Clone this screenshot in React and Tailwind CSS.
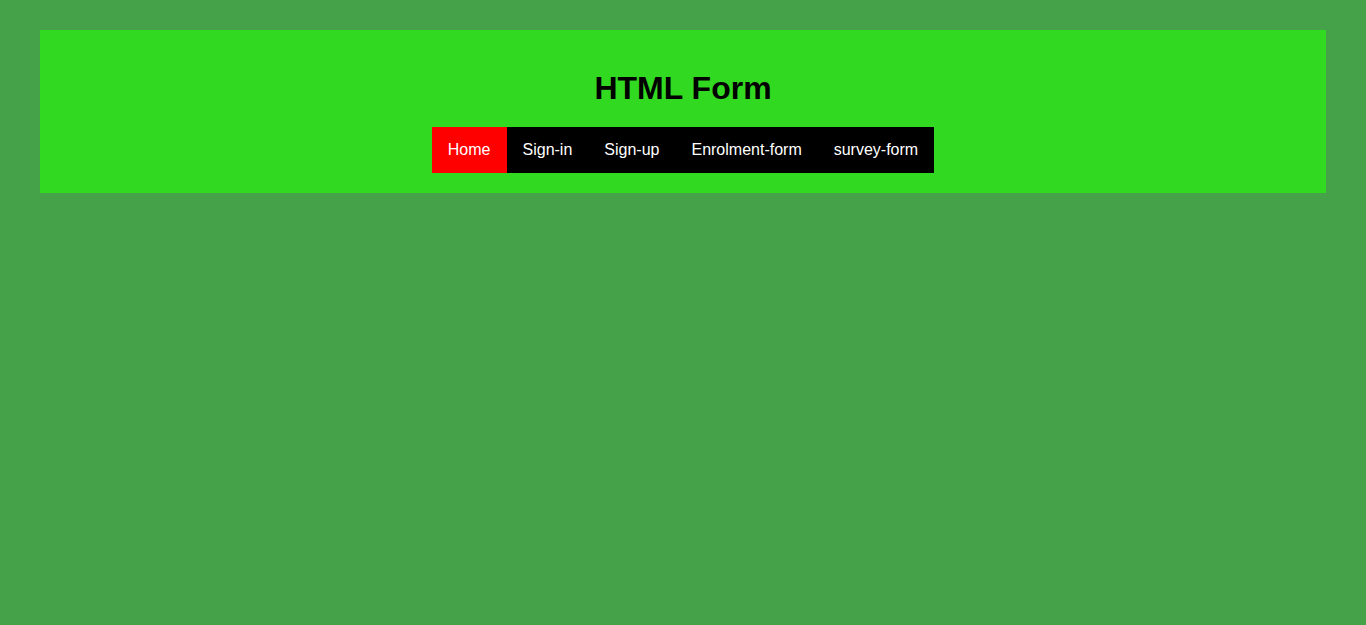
export default function App() {
  const items = ["Home", "Sign-in", "Sign-up", "Enrolment-form", "survey-form"];
  return (
    <div className="min-h-[625px] bg-[#46a249] pt-[30px] px-[40px]" style={{ fontFamily: '"Liberation Sans", Arial, sans-serif' }}>
      <div className="bg-[#32d921] pt-[40px] pb-[20px] flex flex-col items-center">
        <h1 className="text-[32px] font-bold leading-[37px] text-black m-0">HTML Form</h1>
        <nav className="mt-[20px] flex bg-black">
          {items.map((t, i) => (
            <a
              key={t}
              href="#"
              className={`px-[16px] py-[14px] text-[16px] leading-[18px] text-white ${i === 0 ? "bg-[#ff0000]" : ""}`}
            >
              {t}
            </a>
          ))}
        </nav>
      </div>
    </div>
  );
}
